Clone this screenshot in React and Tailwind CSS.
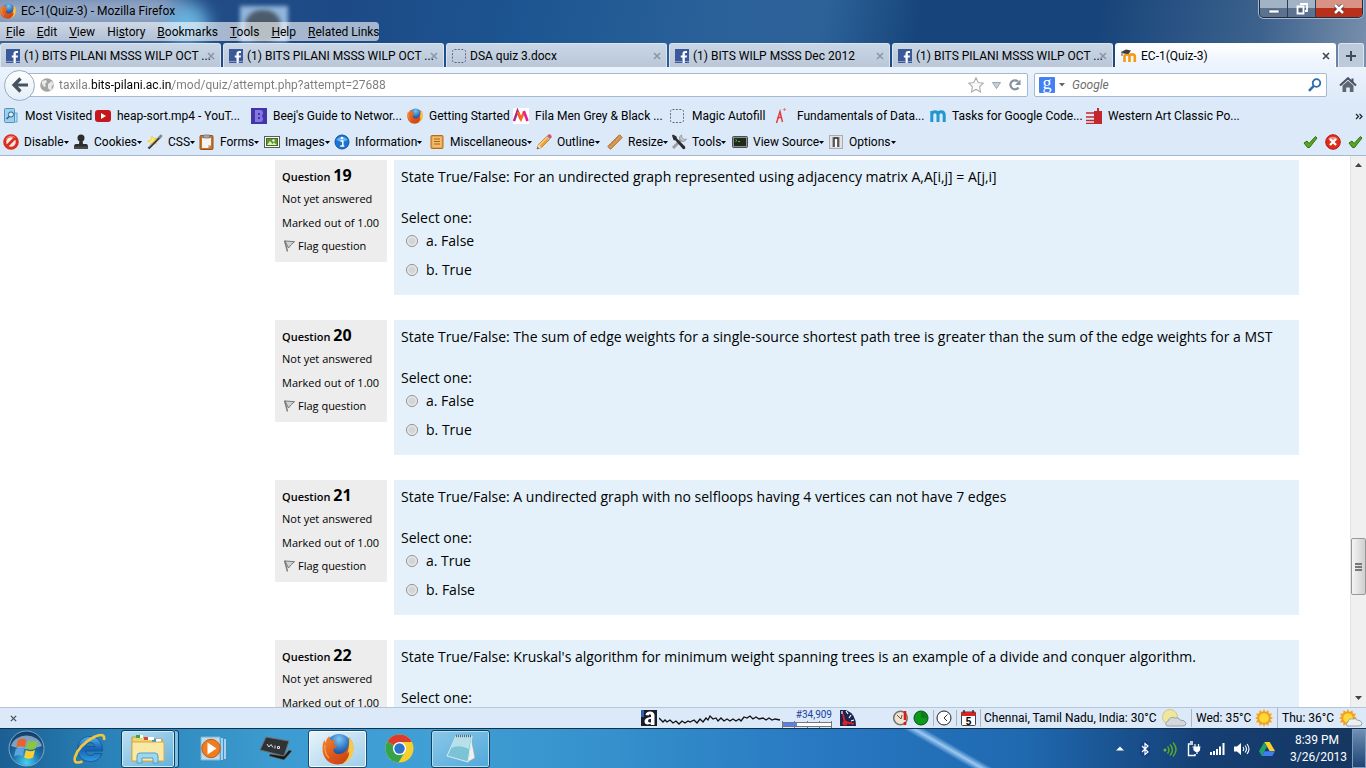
import React from "react";

function Svg({ s = 16, w, h, vb, className = "", children }) {
  const width = w || s;
  const height = h || s;
  return (
    <svg width={width} height={height} viewBox={vb || `0 0 ${width} ${height}`} className={`shrink-0 ${className}`} aria-hidden="true">
      {children}
    </svg>
  );
}

const Firefox = ({ s = 16 }) => (
  <Svg s={s} vb="0 0 32 32">
    <defs>
      <radialGradient id="ffGlobe" cx="0.5" cy="0.2" r="0.8">
        <stop offset="0" stopColor="#7cc8f2" />
        <stop offset="0.5" stopColor="#2a6fc0" />
        <stop offset="1" stopColor="#12264f" />
      </radialGradient>
      <linearGradient id="ffTail" x1="0" y1="0" x2="1" y2="1">
        <stop offset="0" stopColor="#f58a2c" />
        <stop offset="0.5" stopColor="#dd561c" />
        <stop offset="1" stopColor="#c13d12" />
      </linearGradient>
    </defs>
    <circle cx="17" cy="14" r="13" fill="url(#ffGlobe)" />
    <path d="M27 4C32 9 33 18 28 25 24 30 19 31.500 15.500 31.500 7 31.500.5 25 .5 16 .5 12 1 9 2.500 7L3.500 10C4 7 5.500 4.500 7.500 3 7.500 5 8 6.500 9.500 7.500 11 7 12.500 7 14 7.500 13 8.500 11.500 9.500 11.500 11 12 12.200 13.500 12.500 15.500 12.500 15 14.500 12.500 15 11.500 16 11 19 14 21.500 18 21 24 20 28 14 27 4z" fill="url(#ffTail)" />
    <path d="M27 4c4 4 5.500 9 4.500 14-1 6-5 11-11 12.800C25.500 27 27.500 23 27 18.500l-2 2.500c2-5 2.500-11 2-17z" fill="#f8c84a" />
    <path d="M3 12q-1 8 4 13" fill="none" stroke="#f7a24b" strokeWidth="1.200" />
  </Svg>
);

const Facebook = () => (
  <Svg s={14}>
    <rect width="14" height="14" fill="#3b5998" />
    <path d="M7.500 14V8.500H5.800V6.500h1.700V4.800C7.500 3 8.500 2 10.200 2H12v2h-1.200c-.8 0-1 .3-1 1v1.500H12l-.3 2H9.800V14z" fill="#fff" />
    <path d="M0 12.500h7.500M9.800 12.500H14" stroke="#8b9dc3" />
  </Svg>
);

const Dashed = () => (
  <Svg s={14}>
    <rect x="0.5" y="0.5" width="13" height="13" rx="2" fill="none" stroke="#5f6a74" strokeDasharray="2 1.400" />
  </Svg>
);

const Moodle = () => (
  <Svg w={16} h={14}>
    <path d="M3.500 13V7.500C3.500 5 8.500 4.500 8.500 7.500V13M8.500 7.500C8.500 4.700 13.800 4.700 13.800 7.500V13" fill="none" stroke="#f49a15" strokeWidth="2.600" />
    <path d="M0 3 5 .5 10 1.500 7.500 5 2.500 4.500z" fill="#3d3d3d" />
    <path d="M1 3v4" stroke="#555" />
  </Svg>
);

const Cross = ({ color = "#8a949e", s = 8 }) => (
  <Svg s={s} vb="0 0 8 8">
    <path d="M1 1l6 6M7 1 1 7" stroke={color} strokeWidth="1.600" />
  </Svg>
);

const icons = {
  visited: (
    <Svg s={16}>
      <path d="M10 5h4v9h-4" fill="#b9dff2" stroke="#5aa5cf" />
      <rect x="1.500" y="0.500" width="10" height="14" rx="1" fill="#9fd0ea" stroke="#4a97c5" />
      <circle cx="8" cy="6.500" r="2.600" fill="#d8eef9" stroke="#2b5f8a" />
      <path d="M6.200 8.500 3.500 11" stroke="#2b5f8a" strokeWidth="1.500" />
    </Svg>
  ),
  youtube: (
    <Svg s={16}>
      <rect y="2" width="16" height="12" rx="3" fill="#c4161c" />
      <path d="M6 5v6l5-3z" fill="#fff" />
    </Svg>
  ),
  beej: (
    <Svg s={16}>
      <rect width="16" height="16" fill="#4335a8" />
      <path d="M4 2h5q3 0 3 3 0 2-1.500 3Q12 9 12 11q0 3-3 3H4z" fill="#8477e0" />
      <path d="M7 5h2v2H7zM7 9h2v2H7z" fill="#4335a8" />
    </Svg>
  ),
  firefox: <Firefox />,
  myntra: (
    <Svg s={16}>
      <rect width="16" height="16" fill="#fff" />
      <path d="M1 13 4.500 3l3 8" fill="none" stroke="#b5247c" strokeWidth="2.400" />
      <path d="M5 4l3 7 3-7" fill="none" stroke="#f26a21" strokeWidth="2.600" />
      <path d="M10.800 3l3.700 10" stroke="#e91e8c" strokeWidth="2.600" />
    </Svg>
  ),
  dashed: <Dashed />,
  letterA: (
    <Svg s={16}>
      <path d="M1.500 15 5 3.500 7.500 14M2 10l5-1" fill="none" stroke="#e23a3a" strokeWidth="1.400" />
      <path d="M8 1.500h3M9.500 0v3" stroke="#ef7a7a" />
    </Svg>
  ),
  tasks: (
    <Svg s={16}>
      <path d="M1.800 14V3M1.800 7C2 2.500 8 2.500 8 7v7M8 7c.2-4.500 6.200-4.500 6.200 0v7" fill="none" stroke="#2196cf" strokeWidth="3" />
    </Svg>
  ),
  western: (
    <Svg s={16}>
      <path d="M8 3h3V0h2v3h3v13H8z" fill="#c4262e" />
      <path d="M0 5h8M0 9h8M0 12.500h8M0 15.500h8" stroke="#c4262e" strokeWidth="1.500" />
    </Svg>
  ),
  disable: (
    <Svg s={16}>
      <circle cx="8" cy="8" r="6.300" fill="#f7e5df" stroke="#d92f1e" strokeWidth="3" />
      <path d="M12.500 3.500l-9 9" stroke="#d92f1e" strokeWidth="2.600" />
      <path d="M3 5.500a6 6 0 0 1 9-2" fill="none" stroke="#f58b78" />
    </Svg>
  ),
  cookies: (
    <Svg s={16}>
      <circle cx="8" cy="4" r="3.500" fill="#2d2d2d" />
      <path d="M6.500 6h3l.5 4h3q2 0 2 3H1Q1 10 3 10h3z" fill="#2d2d2d" />
      <rect x="1" y="12.500" width="14" height="2.500" rx="0.500" fill="#4a4a4a" />
    </Svg>
  ),
  css: (
    <Svg s={16}>
      <path d="M5 2l1.500 2.500L9.500 4 8 7l2 3-4-.5L4 13V9L.5 7 4 6z" fill="#fbe96b" stroke="#f1cf3a" strokeWidth="0.800" />
      <path d="M1.500 14.500 14 2" stroke="#3b3b3b" strokeWidth="2.400" />
      <path d="M12.200 3.800 14.800 1.200" stroke="#8a8a8a" strokeWidth="2.400" />
      <path d="M2 13 12 3" stroke="#b9b9b9" strokeWidth="0.600" />
    </Svg>
  ),
  forms: (
    <Svg s={16}>
      <rect x="1" y="1.500" width="13" height="14" rx="1" fill="#c6752b" stroke="#9a5314" />
      <path d="M3 4h9v7l-3 3H3z" fill="#f6f4f2" />
      <path d="M12 11H9v3z" fill="#c9c3bc" />
      <path d="M4.500 1h6v3h-6z" fill="#a8a8a8" stroke="#6e6e6e" strokeWidth="0.700" />
    </Svg>
  ),
  images: (
    <Svg s={16}>
      <rect x="0.500" y="2.500" width="15" height="11" fill="#fafafa" stroke="#5b5b5b" />
      <rect x="2.500" y="4.500" width="11" height="7" fill="#5d9632" stroke="#3f6f20" />
      <path d="M3 11l3-4 2.500 3 1.500-1.500L13 11z" fill="#e3efb1" />
      <circle cx="9.500" cy="6.500" r="1.200" fill="#fff" />
    </Svg>
  ),
  info: (
    <Svg s={16}>
      <circle cx="8" cy="8" r="7" fill="#1b75cf" stroke="#0d54a5" />
      <path d="M2.500 6a6 5 0 0 1 11 0Q8 9 2.500 6z" fill="#6bb2ef" />
      <circle cx="8" cy="4" r="1.300" fill="#fff" />
      <path d="M6.500 7h2.300v5M6.300 12h4" fill="none" stroke="#fff" strokeWidth="1.500" />
    </Svg>
  ),
  misc: (
    <Svg s={16}>
      <rect x="2" y="1.500" width="12" height="13" rx="1" fill="#e9a147" stroke="#b66a18" />
      <rect x="3.500" y="3" width="9" height="10" fill="#f4bd6c" />
      <path d="M5 5h6M5 7.500h6M5 10h6" stroke="#a5611b" />
    </Svg>
  ),
  outline: (
    <Svg s={16}>
      <path d="M1 15l1.500-4.500L11 2l3 3-8.500 8.500z" fill="#f2a135" stroke="#b5651a" strokeWidth="0.700" />
      <path d="M3 11.500 11.500 3" stroke="#fbd27c" strokeWidth="1.200" />
      <path d="M1 15l1.500-4.500 3 3z" fill="#f4dcb8" />
      <path d="M1 15l.7-2 1.300 1.300z" fill="#333" />
      <path d="M11 2l1.500-1.500q1.500-.5 2.500.5t.5 2.500L14 5z" fill="#d8536a" />
      <path d="M10.500 2.500l3 3" stroke="#bfc3c9" strokeWidth="1.200" />
    </Svg>
  ),
  resize: (
    <Svg s={16}>
      <path d="M.8 12.500 12.500.8 15.200 3.500 3.500 15.200z" fill="#dc9a50" stroke="#a8682b" />
      <path d="M5 8l1.200 1.200M7.500 5.500l1.200 1.200M10 3l1.200 1.200M2.800 10.200 4 11.400" stroke="#a8682b" strokeWidth="0.800" />
    </Svg>
  ),
  tools: (
    <Svg s={16}>
      <path d="M2 14 11 5" stroke="#9a9fa4" strokeWidth="3" />
      <path d="M10.500 1q-2.500 1-2 4L11 7.500q3 .5 4.500-2.500l-2.500.5-2-2z" fill="#c2c7cb" stroke="#83888d" strokeWidth="0.700" />
      <path d="M1 1.500 2 .5l3.500 2 .5 2 8 8q1 2-.5 2.500-1.500.5-2-.5L4.500 6.500l-2-.5z" fill="#2c2c2c" />
    </Svg>
  ),
  source: (
    <Svg s={16}>
      <rect x="0.500" y="2.500" width="15" height="11" rx="1" fill="#8d8f91" stroke="#4b4d4f" />
      <rect x="2" y="4" width="12" height="8" fill="#1f2a1e" />
      <path d="M3.500 5.500l1.500 1-1.500 1M6 7.500h2" fill="none" stroke="#5bc23c" />
    </Svg>
  ),
  options: (
    <Svg s={16}>
      <rect x="1.500" y="1.500" width="13" height="13" fill="#e2e2e2" stroke="#a9abae" />
      <path d="M4.500 3v10M11.500 3v10" stroke="#aaa" />
      <path d="M6 13V4h4v9" fill="#fff" stroke="#222" strokeWidth="1.400" />
    </Svg>
  ),
};

const menus = [["F", "ile", ""], ["E", "dit", ""], ["V", "iew", ""], ["s", "tory", "Hi"], ["B", "ookmarks", ""], ["T", "ools", ""], ["H", "elp", ""], ["R", "elated Links", ""]];

const tabs = [
  { t: "(1) BITS PILANI MSSS WILP OCT ...", i: <Facebook /> },
  { t: "(1) BITS PILANI MSSS WILP OCT ...", i: <Facebook /> },
  { t: "DSA quiz 3.docx", i: <Dashed /> },
  { t: "(1) BITS WILP MSSS Dec 2012", i: <Facebook /> },
  { t: "(1) BITS PILANI MSSS WILP OCT ...", i: <Facebook /> },
  { t: "EC-1(Quiz-3)", i: <Moodle />, on: true },
];

const bookmarks = [
  ["visited", "Most Visited", "w-[92px]"],
  ["youtube", "heap-sort.mp4 - YouT...", "w-[156px]"],
  ["beej", "Beej's Guide to Networ...", "w-[156px]"],
  ["firefox", "Getting Started", "w-[106px]"],
  ["myntra", "Fila Men Grey & Black ...", "w-[157px]"],
  ["dashed", "Magic Autofill", "w-[105px]"],
  ["letterA", "Fundamentals of Data...", "w-[155px]"],
  ["tasks", "Tasks for Google Code...", "w-[156px]"],
  ["western", "Western Art Classic Po...", "w-[156px]"],
];

const devTools = [
  ["disable", "Disable", "w-[70px]"],
  ["cookies", "Cookies", "w-[74px]"],
  ["css", "CSS", "w-[52px]"],
  ["forms", "Forms", "w-[65px]"],
  ["images", "Images", "w-[70px]"],
  ["info", "Information", "w-[95px]"],
  ["misc", "Miscellaneous", "w-[107px]"],
  ["outline", "Outline", "w-[71px]"],
  ["resize", "Resize", "w-[64px]"],
  ["tools", "Tools", "w-[61px]"],
  ["source", "View Source", "w-[96px]"],
  ["options", "Options", "w-[70px]"],
];

const questions = [
  { n: 19, text: "State True/False: For an undirected graph represented using adjacency matrix A,A[i,j] = A[j,i]", o: ["a. False", "b. True"] },
  { n: 20, text: "State True/False: The sum of edge weights for a single-source shortest path tree is greater than the sum of the edge weights for a MST", o: ["a. False", "b. True"] },
  { n: 21, text: "State True/False: A undirected graph with no selfloops having 4 vertices can not have 7 edges", o: ["a. True", "b. False"] },
  { n: 22, text: "State True/False: Kruskal's algorithm for minimum weight spanning trees is an example of a divide and conquer algorithm.", o: ["a. True", "b. False"] },
];

function TitleBar() {
  return (
    <header className="relative shrink-0 overflow-hidden bg-[linear-gradient(100deg,#2a4f85_0%,#1d4a86_25%,#1c5591_38%,#2a6199_52%,#2c6298_60%,#17457b_67%,#17447a_80%,#3d638d_92%,#7a90ad_100%)]">
      <div className="absolute -left-6 -top-2 h-10 w-52 rounded-full bg-[#a9b9d3] opacity-90 blur-md" />
      <div className="absolute left-[165px] top-1 h-10 w-11 rounded-full bg-[#6cb8e4] opacity-90 blur-sm" />
      <div className="absolute left-[240px] top-1.5 h-9 w-12 bg-[#92b5dc] blur-[2px]" />
      <div className="absolute left-[245px] top-2.5 h-8 w-9 rounded-full bg-[#4c5c6b] blur-[2px]" />
      <div className="relative flex h-[22px] items-start justify-between">
        <div className="flex items-center gap-[5px] pt-0.5">
          <Firefox />
          <h1 className="text-[12px] leading-[18px] text-black">EC-1(Quiz-3) - Mozilla Firefox</h1>
        </div>
        <div className="mr-[3px] flex h-[18px] overflow-hidden rounded-b-[5px] border border-t-0 border-[#1d2e44] shadow-[0_0_0_1px_#a7b8cc]">
          <button aria-label="Minimize" className="flex w-7 items-center justify-center border-r border-[#2b3d55] bg-linear-to-b from-[#a3b3c6] from-45% to-[#5c728e] to-50%">
            <Svg w={12} h={10}><path d="M1 6h10v3H1z" fill="#fff" stroke="#44505f" strokeWidth="0.600" /></Svg>
          </button>
          <button aria-label="Restore" className="flex w-7 items-center justify-center border-r border-[#2b3d55] bg-linear-to-b from-[#a3b3c6] from-45% to-[#5c728e] to-50%">
            <Svg s={12}><path d="M4 1h7v7H9M1.500 3.500h6v7h-6z" fill="none" stroke="#fff" strokeWidth="1.800" /><path d="M3.500 6h2v2.500h-2z" fill="#4a5566" /></Svg>
          </button>
          <button aria-label="Close" className="flex w-[46px] items-center justify-center bg-linear-to-b from-[#d99384] from-45% to-[#b8301a] to-50%">
            <Svg w={12} h={10}><path d="M2 1l8 8M10 1 2 9" stroke="#48363a" strokeWidth="4" /><path d="M2 1l8 8M10 1 2 9" stroke="#fff" strokeWidth="2.600" /></Svg>
          </button>
        </div>
      </div>
      <nav className="relative mb-0.5 flex h-[19px] w-[379px] items-center gap-3 rounded-r-[4px] bg-white/60 pl-1.5 text-[12px] text-black">
        {menus.map(([u, rest, pre]) => (
          <button key={u + rest} className="whitespace-nowrap">{pre}<u>{u}</u>{rest}</button>
        ))}
      </nav>
      <div className="relative flex h-6 gap-0.5" role="tablist">
        {tabs.map((t, k) => (
          <div key={k} className={`flex min-w-0 max-w-[221px] flex-1 items-center gap-1 rounded-t-[3px] border border-b-0 pl-[5px] pr-[5px] ${t.on ? "border-white bg-linear-to-b from-white to-[#eaf2fd]" : "border-[#dbe4ef] bg-linear-to-b from-[#c9d6e6] to-[#b9c7d8]"}`}>
            <button role="tab" aria-selected={!!t.on} className="flex min-w-0 flex-1 items-center gap-1 text-left text-[12px] text-black">
              {t.i}
              <span className="whitespace-nowrap">{t.t}</span>
            </button>
            <button aria-label="Close tab"><Cross color={t.on ? "#3f464d" : "#8d97a2"} /></button>
          </div>
        ))}
        <button aria-label="New tab" className="flex w-[26px] items-center justify-center rounded-t-[3px] border border-b-0 border-[#dbe4ef] bg-[#bccada]">
          <Svg s={10}><path d="M5 0v10M0 5h10" stroke="#3f4a55" strokeWidth="2" /></Svg>
        </button>
      </div>
    </header>
  );
}

function NavBar() {
  return (
    <div className="flex h-9 shrink-0 items-center bg-linear-to-b from-[#ecf3fd] to-[#dce9f8] pl-1 pr-[9px]">
      <button aria-label="Back" className="z-10 flex size-[31px] shrink-0 items-center justify-center rounded-full border border-[#98abc4] bg-linear-to-b from-white to-[#e4edf8]">
        <Svg w={18} h={16}><path d="M9.500 1.500 3 8l6.500 6.500M3.500 8H17" fill="none" stroke="#47525e" strokeWidth="3.200" /></Svg>
      </button>
      <div className="-ml-3 flex h-6 min-w-0 flex-1 items-center rounded-[2px] border border-[#a3b8d3] bg-white pl-4 pr-1.5">
        <Svg s={14}>
          <circle cx="7" cy="7" r="6.800" fill="#a3a3a3" />
          <path d="M2 3l4-1 1 2-2 2 1 2-2 1-2-3zM8 6l4-3 1.500 4-2 1 .5 3-2 1.500L8 10z" fill="#e9e9e9" />
        </Svg>
        <input aria-label="Address" readOnly defaultValue="taxila.bits-pilani.ac.in/mod/quiz/attempt.php?attempt=27688" className="ml-[5px] min-w-0 flex-1 bg-[linear-gradient(90deg,#7c7c7c_32px,#000_32px,#000_113px,#7c7c7c_113px)] bg-clip-text text-[12px] text-transparent outline-none" />
        <div className="flex items-center gap-2">
          <button aria-label="Bookmark this page"><Svg s={16}><path d="M8 .8l2.200 4.700 5.100.7-3.700 3.600.9 5.100L8 12.400l-4.500 2.500.9-5.100L.7 6.200l5.100-.7z" fill="#fafafa" stroke="#a9aeb4" strokeWidth="1.100" /></Svg></button>
          <button aria-label="History"><Svg w={9} h={7}><path d="M.5.500h8L4.500 6.500z" fill="#c6ced8" stroke="#9aa6b5" /></Svg></button>
          <button aria-label="Reload"><Svg s={12}><path d="M9.500 8.500A4.500 4.500 0 1 1 9 2.500" fill="none" stroke="#84909e" strokeWidth="2.200" /><path d="M11.500.500v5.500H6z" fill="#84909e" /></Svg></button>
        </div>
      </div>
      <div className="ml-1.5 flex h-6 w-[293px] shrink-0 items-center rounded-[2px] border border-[#a3b8d3] bg-white pl-1 pr-1">
        <button aria-label="Search engine" className="flex items-center gap-1">
          <span className="flex size-4 items-center justify-center overflow-hidden rounded-[1px] bg-[#4280f5] pb-1 font-['Liberation_Serif',serif] text-[18px] leading-4 text-white">g</span>
          <Svg w={6} h={4}><path d="M0 0h6L3 3.500z" fill="#666" /></Svg>
        </button>
        <input aria-label="Search" placeholder="Google" className="ml-[7px] min-w-0 flex-1 text-[12px] italic outline-none placeholder:text-[#6e6e6e]" />
        <button aria-label="Submit search"><Svg s={14}><circle cx="8.500" cy="5" r="3.800" fill="none" stroke="#2d6ca8" strokeWidth="1.800" /><path d="M5.800 7.800 1 12.800" stroke="#2d6ca8" strokeWidth="2.400" /></Svg></button>
      </div>
      <button aria-label="Home" className="ml-3"><Svg w={18} h={16}><path d="M1 8.500 9 1.200l8 7.300" fill="none" stroke="#47525e" strokeWidth="2" /><path d="M3.500 8.500 9 3.800l5.500 4.700V15h-3.700v-4.500H7.200V15H3.500z" fill="#5d6874" /><path d="M13.500 1.500v4" stroke="#47525e" strokeWidth="2" /></Svg></button>
    </div>
  );
}

function Toolbars() {
  return (
    <div className="shrink-0 border-b border-[#a5b9d2] bg-[#dbe9f8]">
      <div className="flex h-[26px] items-center pl-[3px] pr-[3px]">
        {bookmarks.map(([i, t, w]) => (
          <a key={t} href="#" className={`flex shrink-0 items-center text-[12px] text-black ${w}`}>
            <span className="flex w-[22px] shrink-0">{icons[i]}</span>
            <span className="whitespace-nowrap">{t}</span>
          </a>
        ))}
        <button aria-label="More bookmarks" className="ml-auto"><Svg w={8} h={7}><path d="M1 1l2.500 2.500L1 6M4.500 1 7 3.500 4.500 6" fill="none" stroke="#222" strokeWidth="1.200" /></Svg></button>
      </div>
      <div className="flex h-[26px] items-center pl-[3px] pr-[3px]">
        {devTools.map(([i, t, w]) => (
          <button key={t} className={`flex shrink-0 items-center text-[12px] text-black ${w}`}>
            <span className="flex w-[21px] shrink-0">{icons[i]}</span>
            <span className="whitespace-nowrap">{t}</span>
            <Svg w={5} h={3}><path d="M0 0h5L2.500 3z" fill="#000" /></Svg>
          </button>
        ))}
        <div className="ml-auto flex items-center gap-[7px]">
          <Check />
          <Svg s={16}><circle cx="8" cy="8" r="7.300" fill="#df2c1c" stroke="#b71a10" /><path d="M3 5a6 5 0 0 1 10 0Q8 8 3 5z" fill="#f28d7c" /><path d="M5 5l6 6M11 5l-6 6" stroke="#fff" strokeWidth="2.400" /></Svg>
          <Check />
        </div>
      </div>
    </div>
  );
}

const Check = () => (
  <Svg w={15} h={14}><path d="M1 8l3-2 2 2.500L12.500 1.500 14 3 6.500 12.500H4.500z" fill="#57a820" stroke="#2f6f0d" /></Svg>
);

function Question({ q }) {
  return (
    <section className="mb-[25px] flex items-start gap-[7px] text-black">
      <div className="flex h-[102px] w-28 shrink-0 flex-col bg-[#ededed] pl-[7px] pt-[3px] text-[11px] leading-6">
        <h2 className="h-6 font-semibold">Question <span className="text-[16px] font-bold">{q.n}</span></h2>
        <p>Not yet answered</p>
        <p className="leading-[23px]">Marked out of 1.00</p>
        <a href="#" className="flex items-center gap-[3px] pl-0.5">
          <Svg w={11} h={12}>
            <path d="M.5.500 3.500 11.500" stroke="#777" strokeWidth="1.400" />
            <path d="M1 1l9.500.700-3.500 3-2.500 3.300z" fill="#d4d4d4" stroke="#777" />
          </Svg>
          Flag question
        </a>
      </div>
      <fieldset className="h-[135px] min-w-0 flex-1 bg-[#e4f1fa] px-[7px] pt-[7px] text-[14px] leading-5">
        <p className="mb-[21px]">{q.text}</p>
        <p className="mb-[3px]">Select one:</p>
        {q.o.map((o) => (
          <label key={o} className="mb-[9px] flex items-center gap-2 pl-[5px]">
            <input type="radio" name={`q${q.n}`} className="size-3 shrink-0 appearance-none rounded-full border border-[#8e8f8f] bg-[radial-gradient(circle,#d3d6d9_0_3px,#f4f4f4_5px)]" />
            {o}
          </label>
        ))}
      </fieldset>
    </section>
  );
}

function Content() {
  return (
    <div className="flex min-h-0 flex-1 overflow-hidden bg-white">
      <main className="min-w-0 flex-1 overflow-hidden pl-[275px] pr-[51px] pt-1 font-['Open_Sans',sans-serif]">
        {questions.map((q) => <Question key={q.n} q={q} />)}
      </main>
      <div className="flex w-4 shrink-0 flex-col items-center justify-between border-l border-[#e3e3e3] bg-[#f0f0f0] py-[7px]">
        <Svg w={7} h={4}><path d="M0 4h7L3.500 0z" fill="#444" /></Svg>
        <div className="mt-[270px] flex h-[57px] w-[15px] items-center justify-center rounded-[2px] border border-[#979797] bg-linear-to-r from-[#f5f5f5] to-[#cfcfd2]">
          <Svg w={7} h={8}><path d="M0 1h7M0 4h7M0 7h7" stroke="#555" strokeWidth="1.400" /></Svg>
        </div>
        <Svg w={7} h={4}><path d="M0 0h7L3.500 4z" fill="#444" /></Svg>
      </div>
    </div>
  );
}

const Sun = ({ s = 18 }) => (
  <Svg s={s} vb="0 0 18 18">
    <path d="M9 0l1.500 3L13.500 1.200l.3 3.300 3.300.3L15.300 7.500l2.700 1.500-2.700 1.500 1.800 2.700-3.300.3-.3 3.300-3-1.800L9 18l-1.500-3-3 1.800-.3-3.300-3.300-.3L2.700 10.500 0 9l2.700-1.500L.9 4.800l3.300-.3.3-3.300L7.500 3z" fill="#f6a21c" />
    <circle cx="9" cy="9" r="5.300" fill="#ffd93b" stroke="#ef9416" strokeWidth="0.800" />
  </Svg>
);

function StatusBar() {
  return (
    <div className="flex h-[21px] shrink-0 items-center border-t border-[#b6c6da] bg-[#dbe9f8] pl-2 text-[12px] text-black">
      <button aria-label="Close add-on bar" className="ml-0.5"><Cross color="#4d555e" s={7} /></button>
      <div className="ml-auto flex items-center">
        <Svg s={16}><rect width="16" height="16" fill="#1c1c28" /><path d="M0 0h3v7H0z" fill="#2f5fae" /><path d="M4.500 5Q5 1.500 9 1.500T13.500 5v10H10l-.5-1.200Q4 16 3.500 11.500 3.500 7.500 10 7V5Q8.500 3.500 7.500 5.500z" fill="#fff" /><path d="M7 10.500q0-1.500 3-1.800v3.500q-3 1-3-1.700z" fill="#1c1c28" /></Svg>
        <Svg w={122} h={12} className="ml-0.5 mt-1"><polyline fill="none" stroke="#111" strokeWidth="1.300" points="0,4 2,6 4,8 6,6 8,8 11,6 14,9 17,7 20,10 23,7 26,9 29,7 31,8 35,6 38,9 41,5 44,8 47,4 49,6 51,2 54,5 57,4 59,7 62,4 65,7 68,5 71,7 74,5 77,7 80,5 82,7 85,3 88,4 91,2 94,5 97,3 100,5 104,4 107,6 110,4 113,6 116,5 121,6" /></Svg>
        <div className="ml-px w-[50px] text-right">
          <div className="text-[10px] leading-3 text-[#1c3f9c]">#34,909</div>
          <Svg w={50} h={7}><path d="M.5 0v7M12.500 0v7M25.500 0v7M37.500 0v7M49.500 0v7" stroke="#777" /><rect x="0.500" y="1.500" width="49" height="4" fill="#fff" stroke="#777" /><rect x="1" y="2" width="14" height="3" fill="#5a80ee" /></Svg>
        </div>
        <Svg s={16} className="ml-2"><path d="M0 0h6q10 4 10 16H0z" fill="#1b2352" /><path d="M6 1l2 3M11 5l-2 3M14 10l-3 1M2 1v3" stroke="#fff" strokeWidth="1.200" /><path d="M5 13 3 4M5 12l9 2" stroke="#e02020" strokeWidth="1.800" /><circle cx="5" cy="13" r="2.500" fill="#e02020" /></Svg>
        <Svg s={16} className="ml-[37px]"><circle cx="7.500" cy="8" r="6.800" fill="#efe3cb" stroke="#787470" strokeWidth="1.500" /><path d="M4 5l4 4 1-4" fill="none" stroke="#555" /><path d="M12 1v9M12 12v3" stroke="#e01818" strokeWidth="2.600" /></Svg>
        <Svg s={16} className="ml-1"><circle cx="8" cy="8" r="7" fill="#0a9a18" stroke="#0a4d10" /><path d="M8 8V1q6 1 7 7z" fill="#117a1a" /></Svg>
        <span className="ml-1 h-4 border-l border-[#aeb5bd]" />
        <Svg s={16} className="ml-0.5"><circle cx="8" cy="8" r="7" fill="#fff" stroke="#222" /><path d="M11.500 4.500 8 8l3 3" fill="none" stroke="#333" /></Svg>
        <span className="ml-1 h-4 border-l border-[#aeb5bd]" />
        <Svg w={15} h={16} className="ml-1"><rect x="0.500" y="2" width="14" height="13.500" rx="1" fill="#fff" stroke="#444" /><path d="M.5 2h14v4H.5z" fill="#d92222" /><path d="M3 0v3M12 0v3" stroke="#333" strokeWidth="1.500" /><text x="7.500" y="14.500" textAnchor="middle" fontSize="10" fontWeight="700" fontFamily="Liberation Sans">5</text></Svg>
        <div className="ml-1 flex w-[211px] items-center justify-between border-l border-[#aeb5bd] pl-[3px] pr-1">
          <span className="whitespace-nowrap">Chennai, Tamil Nadu, India: 30°C</span>
          <Svg w={26} h={18}><circle cx="9" cy="8" r="7.500" fill="#efe6a0" stroke="#c9b968" strokeWidth="0.700" /><path d="M6 17q-3-3 1-5 2-5 7-3 4-1 5 2 5 0 6 3 0 3-3 3z" fill="#d4d8dc" stroke="#8d9398" strokeWidth="0.800" /></Svg>
        </div>
        <div className="flex w-[86px] items-center justify-between border-l border-[#aeb5bd] pl-1 pr-1">
          <span className="whitespace-nowrap">Wed: 35°C</span>
          <Sun />
        </div>
        <div className="flex w-[89px] items-center justify-between border-l border-[#aeb5bd] pl-1 pr-[3px]">
          <span className="whitespace-nowrap">Thu: 36°C</span>
          <span className="flex items-center">
            <Sun />
            <Svg w={18} h={12} className="-ml-3 mt-2"><path d="M2 10q-2-3 1-4 1-4 5-3 3-1 4 1 4 0 5 3 0 3-3 3z" fill="#eceef1" stroke="#8d9398" strokeWidth="0.800" /></Svg>
          </span>
        </div>
      </div>
    </div>
  );
}

function Taskbar() {
  return (
    <footer className="flex h-10 shrink-0 items-center border-t border-[#14304f] bg-[linear-gradient(30deg,transparent_43%,#9cc8f2_50%,transparent_57%),linear-gradient(90deg,#1b5f94_0%,#2a83b8_8%,#3c9bd0_20%,#409fd4_32%,#3590cb_45%,#2878c2_60%,#1f69b0_75%,#153f74_88%,#15365f_100%)] bg-[length:90px_100%,100%_100%] bg-[position:903px_0,0_0] bg-no-repeat text-white">
      <button aria-label="Start" className="ml-2">
        <Svg s={37}>
          <defs>
            <radialGradient id="orb" cx="0.5" cy="0.9" r="0.9"><stop offset="0" stopColor="#3fd5f4" /><stop offset="0.45" stopColor="#1d6fa8" /><stop offset="1" stopColor="#123a63" /></radialGradient>
          </defs>
          <circle cx="18.500" cy="18.500" r="17.500" fill="url(#orb)" stroke="#7ea8c8" />
          <path d="M3 16a16 14 0 0 1 31 0Q18 22 3 16z" fill="#c3d6e6" opacity="0.6" />
          <path d="M10 10q4-2.500 8.500 0l-1.800 7.500q-4.500-2.500-8.500 0z" fill="#e8642c" />
          <path d="M20 10.500q4.500 2.500 9.500 0l-2 8q-4.700 2.500-9.200 0z" fill="#8cc63f" />
          <path d="M7.800 19q4.200-2.500 8.500 0l-1.800 7.500q-4.200-2.500-8.500 0z" fill="#5ba4e0" />
          <path d="M17.900 20q4.500 2.500 9.200 0l-2 7.500q-4.700 2.500-9 0z" fill="#fcd02e" />
        </Svg>
      </button>
      <button aria-label="Internet Explorer" className="ml-7">
        <Svg s={33}>
          <defs>
            <linearGradient id="ieBlue" x1="0" y1="0" x2="0" y2="1"><stop offset="0" stopColor="#4fb3ee" /><stop offset="0.5" stopColor="#1560b4" /><stop offset="1" stopColor="#2f9ce4" /></linearGradient>
          </defs>
          <path d="M17 4.500C24.500 4.500 30 10 29.500 19H12.500Q13.500 23.500 17.500 23.500 20.500 23.500 21.500 21.500H29Q26.500 29.500 17.500 29.500C9.500 29.500 4.500 24 4.500 17S9.500 4.500 17 4.500zM12.500 14.500H22Q21 10.500 17.200 10.500T12.500 14.500z" fill="url(#ieBlue)" stroke="#154f8e" strokeWidth="0.800" />
          <path d="M31 8Q32.500 0 21 5 6 13 2 25q-2 8 7.500 4.500" fill="none" stroke="#f3c53a" strokeWidth="2.600" />
        </Svg>
      </button>
      <div className="ml-[15px] flex h-[38px]">
        <button aria-label="File Explorer" className="flex w-[54px] items-center justify-center rounded-[3px] border border-[#12405f] bg-linear-to-br from-[#bfe0f2] to-[#5fb1dd] shadow-[inset_0_0_0_1px_#cfe9f7]">
          <Svg w={34} h={30}>
            <path d="M1 3h11l2 2h17v22H1z" fill="#f0d272" stroke="#c39c3a" />
            <path d="M5 1h4v3H5z" fill="#3aa83a" /><path d="M13 3h4v3h-4z" fill="#d9482b" /><path d="M21 5h4v3h-4z" fill="#3a8fd9" />
            <path d="M9 1h3v3H9zM17 3h6v3h-6zM25 5h5v3h-5z" fill="#fff" />
            <path d="M1 8h32v19H1z" fill="#fae9a4" stroke="#cfab4e" />
            <path d="M6 29v-7q0-3 3-3h15q3 0 3 3v7h-5v-5H11v5z" fill="#9fd6ee" stroke="#4da2cc" />
          </Svg>
        </button>
        <span className="w-1 rounded-r-[3px] border border-l-0 border-[#12405f] bg-[#7cc0e3]" />
      </div>
      <button aria-label="Media Player" className="ml-[21px]">
        <Svg w={29} h={26}><path d="M1 1h19v23H1z" fill="#b9dcf0" stroke="#7fb3d3" /><path d="M22 2v22M25 3v20" stroke="#a9d0e8" strokeWidth="2" /><circle cx="11" cy="12.500" r="9.200" fill="#f07c1e" stroke="#c95a0d" /><path d="M7.500 6.500v12l9-6z" fill="#fff" /></Svg>
      </button>
      <button aria-label="VAIO" className="ml-[30px]">
        <Svg w={33} h={26}><path d="M7 1l23 4-5 15L1 14z" fill="#2f3336" stroke="#6c7378" /><path d="M25 20l5-6 3 1-8 9-15-4 1-2z" fill="#17191b" stroke="#777" strokeWidth="0.600" /><path d="M8 8l2 3 2-2.500 2 3M16 9.500v3M18.500 10.500h2v2h-2z" fill="none" stroke="#ddd" /></Svg>
      </button>
      <button aria-label="Firefox" className="ml-4 flex h-[38px] w-[59px] items-center justify-center rounded-[3px] border border-[#1a4a6c] bg-linear-to-br from-[#eaf5fb] to-[#9ccce8] shadow-[inset_0_0_0_1px_#f5fbff]"><Firefox s={32} /></button>
      <button aria-label="Chrome" className="ml-[18px]">
        <Svg s={29}>
          <circle cx="14.500" cy="14.500" r="14" fill="#f7cf2f" />
          <path d="M14.500 14.500 2.400 7.500A14 14 0 0 1 26.800 8H14.500z" fill="#dd3b2d" />
          <path d="M14.500 14.500 2.400 7.500A14 14 0 0 0 13.500 28.500l6-10z" fill="#36a348" />
          <circle cx="14.500" cy="14.500" r="6.600" fill="#fff" /><circle cx="14.500" cy="14.500" r="5.200" fill="#2c74c9" />
        </Svg>
      </button>
      <button aria-label="Notepad" className="ml-[17px] flex h-[38px] w-[59px] items-center justify-center rounded-[3px] border border-[#12405f] bg-linear-to-br from-[#8bc8e8] to-[#4ea8da] shadow-[inset_0_0_0_1px_#b5ddf2]">
        <Svg w={32} h={30}>
          <path d="M26 3l4 21-7 4z" fill="#f1f1ee" stroke="#8d9aa5" strokeWidth="0.600" />
          <path d="M11 2h16l-4 26L2 22z" fill="#7cc3d6" stroke="#d6eef4" />
          <path d="M11 3h15l-2 12Q14 10 6 14z" fill="#c9ebf2" opacity="0.75" />
          <path d="M11 2h16" stroke="#5b6a74" strokeWidth="2.400" strokeDasharray="1 1" />
        </Svg>
      </button>
      <div className="ml-auto flex h-full items-center">
        <Svg w={8} h={5}><path d="M0 4.500h8L4 .5z" fill="#fff" /></Svg>
        <Svg w={12} h={16} className="ml-[15px]"><rect x="1" width="10" height="16" rx="5" fill="#123f86" /><path d="M3 5l6 6L6 13.500v-11L9 5l-6 6" fill="none" stroke="#fff" strokeWidth="1.200" /></Svg>
        <Svg w={14} h={16} className="ml-3"><circle cx="2" cy="9" r="1.500" fill="#6bb92c" /><path d="M4.500 5.500q3 3.500 0 7M7 3.500q5 5.500 0 11M10 1.500q6 7 0 14" fill="none" stroke="#5ba52a" strokeWidth="1.500" /></Svg>
        <Svg w={14} h={16} className="ml-2.5"><path d="M6 3H1.500v11.500H8V13M3 1h3" fill="none" stroke="#fff" strokeWidth="1.400" /><path d="M5.500 6h8M7 7v2l2 1.500h2L12.500 9V7zM8 3v3M11.500 3v3M10 10v3" fill="#fff" stroke="#fff" strokeWidth="1.200" /></Svg>
        <Svg w={15} h={12} className="ml-[9px]"><path d="M1 9v3M4 8v4M7 6v6M10 3.500V12M13.500 0v12" stroke="#fff" strokeWidth="2" /></Svg>
        <Svg w={16} h={14} className="ml-[9px]"><path d="M0 4.500h3L7 1v12L3 9.500H0z" fill="#fff" /><path d="M9 5q1.500 2 0 4M11 3.500q3 3.500 0 7M13 2q4 5 0 10" fill="none" stroke="#fff" strokeWidth="1.100" /></Svg>
        <Svg w={16} h={14} className="ml-[9px]"><path d="M5.300 0h5.400l5.300 9h-5.400z" fill="#f8cf2c" /><path d="M5.300 0 0 9.200 2.700 14 8 4.700z" fill="#1fa463" /><path d="M2.700 14 5.400 9.200H16L13.300 14z" fill="#3d7ff0" /></Svg>
        <div className="ml-[15px] w-[54px] text-center text-[12px] leading-[17px]"><div>8:39 PM</div><div>3/26/2013</div></div>
        <button aria-label="Show desktop" className="ml-2 h-full w-[14px] border border-[#7f9ab8] bg-linear-to-b from-[#6f8fb3] to-[#1c4575]" />
      </div>
    </footer>
  );
}

export default function App() {
  return (
    <div className="flex h-screen flex-col overflow-hidden font-['Roboto',sans-serif]">
      <TitleBar />
      <NavBar />
      <Toolbars />
      <Content />
      <StatusBar />
      <Taskbar />
    </div>
  );
}
